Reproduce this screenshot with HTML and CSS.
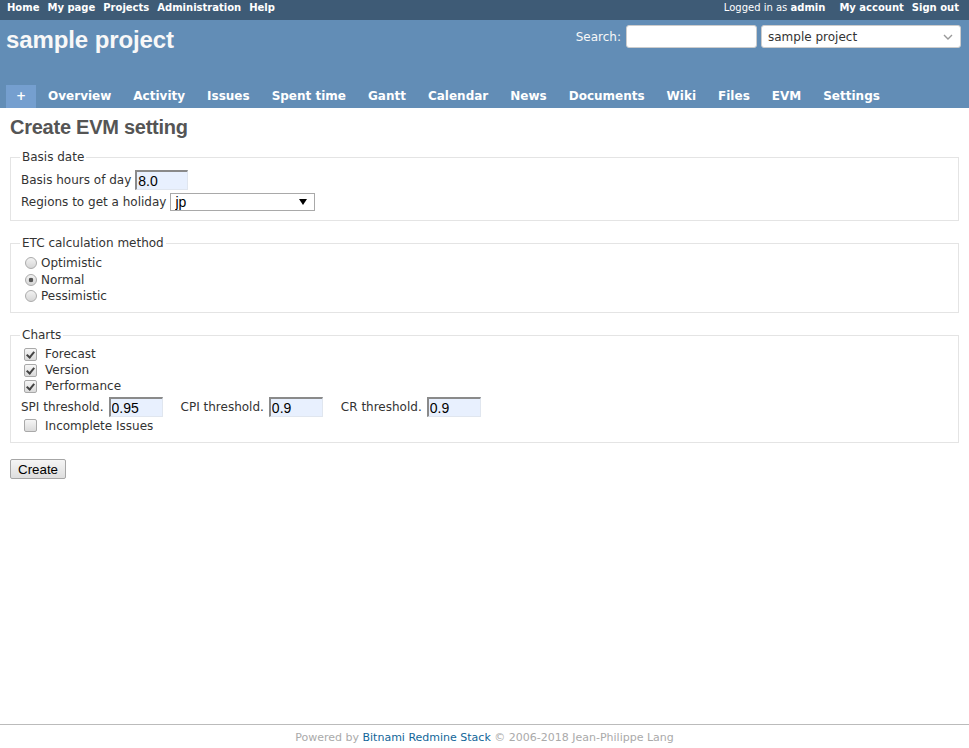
FILE: index.html
```
<!DOCTYPE html>
<html lang="en">
<head>
<meta charset="utf-8">
<title>Create EVM setting - sample project</title>
<link rel="stylesheet" href="styles.css">
</head>
<body>
<div class="wrapper">
  <div class="top-menu">
    <ul class="top-links">
      <li><a href="#">Home</a></li>
      <li><a href="#">My page</a></li>
      <li><a href="#">Projects</a></li>
      <li><a href="#">Administration</a></li>
      <li><a href="#">Help</a></li>
    </ul>
    <div class="account">
      <span class="loggedas">Logged in as <a href="#">admin</a></span>
      <a href="#" class="acc-link">My account</a>
      <a href="#" class="acc-link last">Sign out</a>
    </div>
  </div>

  <div class="header">
    <div class="header-top">
      <h1 class="project-title">sample project</h1>
      <div class="quick-search">
        <label class="search-label" for="q">Search:</label>
        <input class="search-input" id="q" type="text">
        <div class="select-wrap jump-wrap">
          <select class="jump-select"><option>sample project</option></select>
          <svg class="jump-chevron" width="10" height="6" viewBox="0 0 10 6"><path d="M1 1 L5 5 L9 1" fill="none" stroke="#999" stroke-width="1.4"/></svg>
        </div>
      </div>
    </div>
    <ul class="main-menu">
      <li><a href="#" class="new-object">+</a></li>
      <li><a href="#">Overview</a></li>
      <li><a href="#">Activity</a></li>
      <li><a href="#">Issues</a></li>
      <li><a href="#">Spent time</a></li>
      <li><a href="#">Gantt</a></li>
      <li><a href="#">Calendar</a></li>
      <li><a href="#">News</a></li>
      <li><a href="#">Documents</a></li>
      <li><a href="#">Wiki</a></li>
      <li><a href="#">Files</a></li>
      <li><a href="#">EVM</a></li>
      <li><a href="#">Settings</a></li>
    </ul>
  </div>

  <div class="content">
    <h2 class="page-title">Create EVM setting</h2>
    <form class="evm-form">
      <fieldset class="box">
        <legend>Basis date</legend>
        <div class="row row-tall">
          <label for="hours">Basis hours of day</label>
          <input class="num-input w53" id="hours" type="text" value="8.0">
        </div>
        <div class="row row-select">
          <label for="region">Regions to get a holiday</label>
          <div class="select-wrap region-wrap">
            <select class="region-select" id="region"><option>jp</option></select>
            <svg class="region-arrow" width="8" height="6" viewBox="0 0 8 6"><path d="M0 0 H8 L4 6 Z" fill="#000"/></svg>
          </div>
        </div>
      </fieldset>

      <fieldset class="box">
        <legend>ETC calculation method</legend>
        <label class="radio-row"><input type="radio" name="etc" class="radio"> Optimistic</label>
        <label class="radio-row"><input type="radio" name="etc" class="radio" checked> Normal</label>
        <label class="radio-row short"><input type="radio" name="etc" class="radio"> Pessimistic</label>
      </fieldset>

      <fieldset class="box">
        <legend>Charts</legend>
        <label class="check-row"><input type="checkbox" class="check" checked>Forecast</label>
        <label class="check-row"><input type="checkbox" class="check" checked>Version</label>
        <label class="check-row"><input type="checkbox" class="check" checked>Performance</label>
        <div class="row threshold-row">
          <label for="spi">SPI threshold.</label>
          <input class="num-input w54" id="spi" type="text" value="0.95">
          <label for="cpi" class="th-gap">CPI threshold.</label>
          <input class="num-input w54" id="cpi" type="text" value="0.9">
          <label for="cr" class="th-gap">CR threshold.</label>
          <input class="num-input w54" id="cr" type="text" value="0.9">
        </div>
        <label class="check-row incomplete"><input type="checkbox" class="check">Incomplete Issues</label>
      </fieldset>

      <div class="actions">
        <button type="button" class="btn">Create</button>
      </div>
    </form>
  </div>

  <div class="footer">
    Powered by <a href="#">Bitnami Redmine Stack</a> &copy; 2006-2018 Jean-Philippe Lang
  </div>
</div>
</body>
</html>
```

FILE: styles.css
```
* { box-sizing: border-box; }

html, body {
  margin: 0;
  padding: 0;
}

body {
  font-family: "DejaVu Sans", Verdana, sans-serif;
  font-size: 12px;
  color: #333;
  background: #fff;
}

a { text-decoration: none; }

.wrapper {
  min-height: 100vh;
  display: flex;
  flex-direction: column;
}

/* top menu */
.top-menu {
  background: #3e5b76;
  color: #fff;
  height: 20px;
  padding: 2px 10px 0 7px;
  display: flex;
  justify-content: space-between;
  font-size: 10px;
  line-height: 12px;
  font-weight: bold;
}

.top-links {
  list-style: none;
  margin: 0;
  padding: 0;
  display: flex;
}

.top-links li { margin-right: 8px; }
.top-links a, .account a { color: #fff; }

.account { display: flex; }
.loggedas { font-weight: normal; color: #fff; margin-right: 14px; }
.loggedas a { font-weight: bold; }
.acc-link { margin-right: 8px; }
.acc-link.last { margin-right: 0; }

/* header */
.header {
  background: #628db6;
  color: #f8f8f8;
  height: 88px;
  padding: 4px 8px 0 6px;
  display: flex;
  flex-direction: column;
}

.header-top {
  display: flex;
  justify-content: space-between;
  align-items: flex-start;
}

.project-title {
  margin: 0;
  padding: 2px 0 0 0;
  font-family: "Liberation Sans", Arial, sans-serif;
  font-size: 24px;
  font-weight: bold;
  line-height: 28px;
  letter-spacing: -0.1px;
  color: #f8f8f8;
}

.quick-search {
  display: flex;
  align-items: center;
  margin-top: 1px;
}

.search-label {
  margin-right: 5px;
  color: #f8f8f8;
}

.search-input {
  width: 131px;
  height: 23px;
  border: 1px solid #ccc;
  border-radius: 3px;
  background: #fff;
  margin: 0 4px 0 0;
  padding: 2px 4px;
}

.select-wrap { position: relative; }

.jump-select {
  -webkit-appearance: none;
  appearance: none;
  width: 200px;
  height: 23px;
  border: 1px solid #ccc;
  border-radius: 3px;
  background: #fff;
  font-family: "DejaVu Sans", Verdana, sans-serif;
  font-size: 12px;
  color: #333;
  padding: 0 20px 0 6px;
  margin: 0;
  display: block;
}

.jump-chevron {
  position: absolute;
  right: 8px;
  top: 9px;
}

.main-menu {
  list-style: none;
  margin: auto 0 0 0;
  padding: 0;
  display: flex;
  gap: 2px;
}

.main-menu a {
  display: block;
  color: #fff;
  font-weight: bold;
  font-size: 12px;
  line-height: 15px;
  padding: 4px 10px;
}

.main-menu a.new-object { background: #759fcf; }

/* content */
.content {
  flex: 1;
  padding: 6px 10px 10px 10px;
}

.page-title {
  font-family: "Liberation Sans", Arial, sans-serif;
  font-size: 20px;
  font-weight: bold;
  color: #555;
  line-height: 23px;
  margin: 0 0 11px 0;
  padding: 2px 10px 0 0;
  letter-spacing: -0.25px;
}

.box {
  border: 1px solid #e4e4e4;
  margin: 0 0 15px 0;
  padding: 4px 9px 8px 9px;
  min-inline-size: 0;
}

.box legend {
  padding: 0 2px;
  line-height: 14px;
  color: #333;
}

.row {
  display: flex;
  align-items: center;
  gap: 4px;
}

.row label { padding-left: 1px; }

.row-tall { height: 24px; }
.row-select { height: 20px; }

.num-input {
  height: 20px;
  font-family: "Liberation Sans", Arial, sans-serif;
  font-size: 14px;
  color: #000;
  background: #e8f0fe;
  border-style: solid;
  border-width: 2px 1px 1px 2px;
  border-color: #8a8a8a #e0e6ef #e0e6ef #8a8a8a;
  padding: 1px 1px 0 1px;
  margin: 0;
}

.w53 { width: 53px; }
.w54 { width: 54px; }

.region-select {
  -webkit-appearance: none;
  appearance: none;
  width: 145px;
  height: 18px;
  border: 1px solid #a9a9a9;
  border-radius: 0;
  background: #fff;
  font-family: "Liberation Sans", Arial, sans-serif;
  font-size: 14px;
  color: #000;
  padding: 0 16px 0 4px;
  margin: 0;
  display: block;
  line-height: 16px;
}

.region-arrow {
  position: absolute;
  right: 8px;
  top: 6px;
}

/* radios */
.radio-row {
  display: flex;
  align-items: center;
  height: 17px;
  gap: 4px;
}
.radio-row.short { height: 16px; }

.radio {
  -webkit-appearance: none;
  appearance: none;
  width: 12px;
  height: 12px;
  border-radius: 50%;
  border: 1px solid #ababab;
  background: linear-gradient(#f2f2f2, #d6d6d6);
  margin: 0 0 0 5px;
  flex: none;
}

.radio:checked {
  background: radial-gradient(circle, #555 0, #555 2px, transparent 2.6px), linear-gradient(#f2f2f2, #d6d6d6);
}

/* checkboxes */
.check-row {
  display: flex;
  align-items: center;
  height: 16px;
  gap: 8px;
}
.check-row.incomplete { height: 17px; }

.check {
  -webkit-appearance: none;
  appearance: none;
  position: relative;
  width: 13px;
  height: 13px;
  border-radius: 2px;
  border: 1px solid #a9a9a9;
  background: linear-gradient(#f6f6f6, #dadada);
  margin: 0 0 0 4px;
  flex: none;
}

.check:checked::after {
  content: "";
  position: absolute;
  left: 3px;
  top: 1px;
  width: 3px;
  height: 6px;
  border: solid #444;
  border-width: 0 2px 2px 0;
  transform: rotate(40deg);
}

.threshold-row {
  height: 23px;
  padding-top: 3px;
  align-items: center;
  gap: 5px;
}

.th-gap { margin-left: 12px; }

/* button */
.actions { margin-top: 16px; }

.btn {
  font-family: "Liberation Sans", Arial, sans-serif;
  font-size: 13.33px;
  color: #000;
  height: 20px;
  padding: 0 7px;
  border: 1px solid #a6a6a6;
  border-radius: 2px;
  background: linear-gradient(#f5f5f5, #dedede);
  margin: 0;
}

/* footer */
.footer {
  border-top: 1px solid #bbb;
  text-align: center;
  font-size: 11px;
  line-height: 13px;
  color: #aaa;
  padding: 6px 0 4px 0;
  height: 24px;
}

.footer a { color: #169; }
```
